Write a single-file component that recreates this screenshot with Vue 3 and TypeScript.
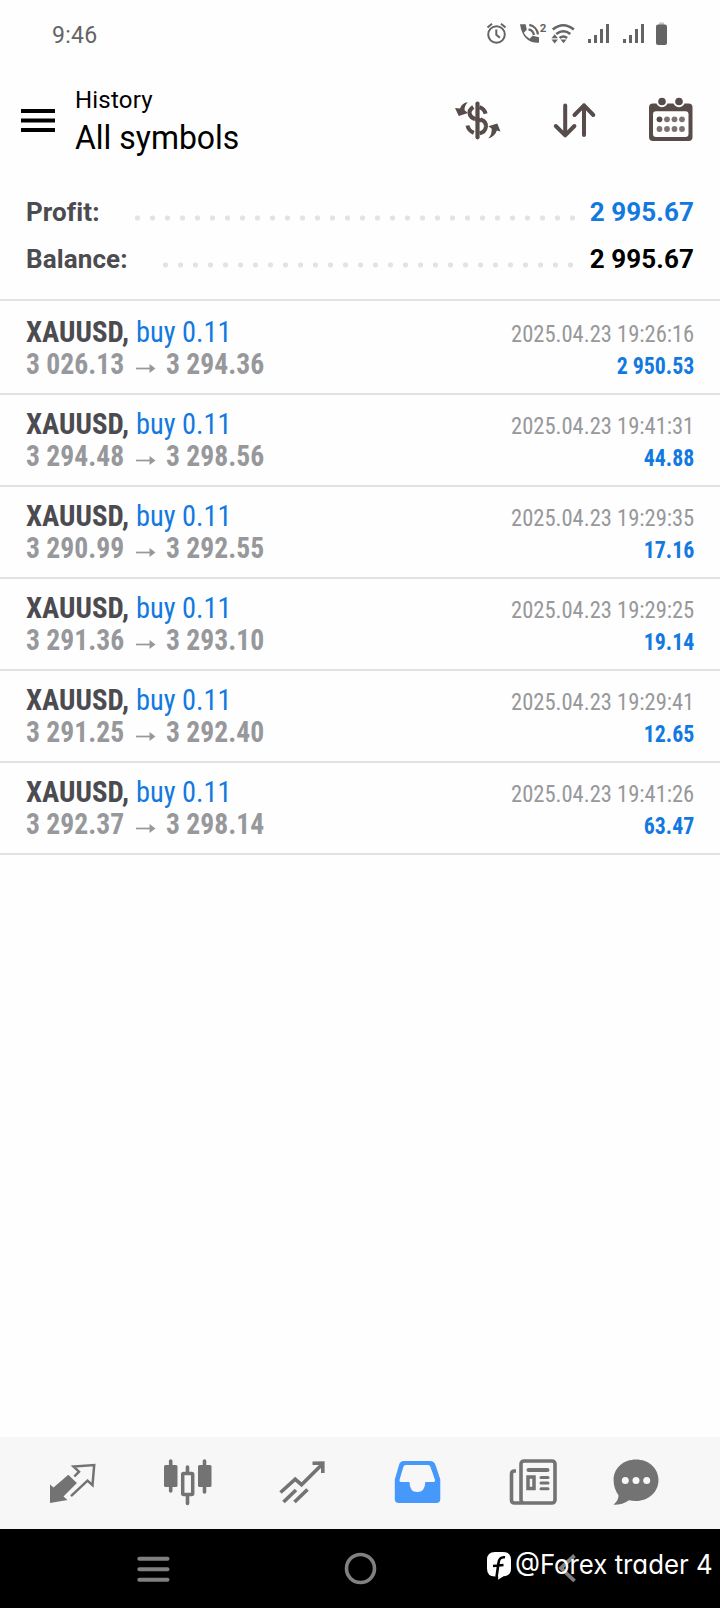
<script setup lang="ts">
interface Deal {
  open: string
  close: string
  time: string
  profit: string
}

const summary = [
  { label: 'Profit:', value: '2 995.67', kind: 'profit' },
  { label: 'Balance:', value: '2 995.67', kind: 'balance' },
]

const deals: Deal[] = [
  { open: '3 026.13', close: '3 294.36', time: '2025.04.23 19:26:16', profit: '2 950.53' },
  { open: '3 294.48', close: '3 298.56', time: '2025.04.23 19:41:31', profit: '44.88' },
  { open: '3 290.99', close: '3 292.55', time: '2025.04.23 19:29:35', profit: '17.16' },
  { open: '3 291.36', close: '3 293.10', time: '2025.04.23 19:29:25', profit: '19.14' },
  { open: '3 291.25', close: '3 292.40', time: '2025.04.23 19:29:41', profit: '12.65' },
  { open: '3 292.37', close: '3 298.14', time: '2025.04.23 19:41:26', profit: '63.47' },
]
</script>

<template>
  <div class="screen">
    <div class="status">
      <span class="clock">9:46</span>
      <svg class="status-icons" width="190" height="30" viewBox="480 20 190 30">
        <g fill="none" stroke="#646464" stroke-width="2">
          <circle cx="496.5" cy="34.5" r="8.3" />
          <path d="M496.3 29.500v5.300l3.600 3M487.500 27.500l4.500-3.700M505.500 27.500l-4.500-3.700" />
        </g>
        <path d="M520 24.200h5.600l1.200 5.600-3 3q2 4 5.800 6l3-3 6.400 1.400v5.600Q523 43.500 520 24.200z" fill="#646464" />
        <path d="M528.500 29.300a7 7 0 0 1 5.500 5.700M529.300 24.800a11 11 0 0 1 8.700 9.500" fill="none" stroke="#646464" stroke-width="2.200" />
        <text x="539.800" y="31.500" class="tiny">2</text>
        <g fill="none" stroke="#646464" stroke-width="2.600">
          <path d="M552.800 29.500q10.500-8.500 21 0M556.300 34q7-5.500 14 0M559.600 38q3.800-3 7.500 0" />
        </g>
        <path d="M551.500 38.200l3.200-4 3.200 4zM551.500 39.400l3.200 4 3.200-4zM560.500 39.400h6l-3 3.800z" fill="#646464" />
        <path d="M588 39h3v4h-3zM594 35h3v8h-3zM600 29h3v14h-3zM606 24h3v19h-3zM623 39h3v4h-3zM629 35h3v8h-3zM635 29h3v14h-3zM641 24h3v19h-3z" fill="#646464" />
        <path d="M659 22.500h5v3h-5z" fill="#c4c4c4" />
        <rect x="656" y="24.500" width="11" height="20.500" rx="2" fill="#646464" />
      </svg>
    </div>

    <header class="top">
      <svg class="menu" width="34" height="23" viewBox="0 0 34 23">
        <path d="M0 0h34v4H0zM0 9.500h34v4H0zM0 19h34v4H0z" />
      </svg>
      <div class="titles">
        <div class="sub">History</div>
        <div class="title">All symbols</div>
      </div>
      <svg class="actions" width="250" height="50" viewBox="450 95 250 50">
        <g fill="none" stroke="#574c49" stroke-width="4">
          <path d="M477.500 103.500v33.800" stroke-linecap="round" stroke-width="4.200" />
          <path d="M485.600 113.800q-1.200-5-6.200-6.600M473.300 107q-4.800 3-3.500 7.500 1 3 5.200 4.500M480.500 119.500q6 1.800 5.400 7.500-.8 5.200-6.400 6.200M467.500 125.500q.9 5 6.300 7.300" />
          <path d="M475 119l6 1.500" />
        </g>
        <path d="M467.800 102.300q-5.500.3-7.800 6.200l-5-.6 3.800 8 9.200-3-3.400-2.600q-.6-4.200 3.200-8z" fill="#574c49" />
        <path d="M488.300 138.600q7-2.500 8.500-8.200l3.700 1.200-3.200-8-9 2.600 3.300 2.400q.7 5.500-3.300 10z" fill="#574c49" />
        <g fill="none" stroke="#574c49" stroke-width="4" stroke-linecap="round" stroke-linejoin="round">
          <path d="M565.200 105.500v29.800M555.800 126l9.400 9.300 9.200-9.300M584 135v-29.700M574.500 115l9.500-9.700 9.300 9.700" />
        </g>
        <rect x="649" y="103.500" width="43.500" height="37.500" rx="4" fill="#574c49" />
        <rect x="653" y="111.300" width="35.500" height="25.800" rx="3" fill="#fff" />
        <g fill="#574c49" stroke="#fff" stroke-width="2">
          <circle cx="662" cy="101.500" r="4.800" />
          <circle cx="679" cy="101.500" r="4.800" />
        </g>
        <g fill="#7d7471">
          <circle cx="659.500" cy="119.300" r="2.900" fill="#574c49" />
          <circle cx="667" cy="119.300" r="2.900" />
          <circle cx="674.500" cy="119.300" r="2.900" />
          <circle cx="682" cy="119.300" r="2.900" />
          <circle cx="659.500" cy="129" r="2.900" />
          <circle cx="667" cy="129" r="2.900" />
          <circle cx="674.500" cy="129" r="2.900" />
          <circle cx="682" cy="129" r="2.900" />
        </g>
      </svg>
    </header>

    <section class="summary">
      <div v-for="s in summary" :key="s.label" class="sum-row" :class="s.kind">
        <span class="label">{{ s.label }}</span>
        <span class="dots"></span>
        <span class="value">{{ s.value }}</span>
      </div>
    </section>

    <main class="deals">
      <div v-for="d in deals" :key="d.open" class="deal">
        <div class="left">
          <div class="symbol"><b>XAUUSD,</b><span class="side">buy 0.11</span></div>
          <div class="prices">
            <span class="price">{{ d.open }}</span>
            <svg class="arrow" width="20" height="11" viewBox="0 0 20 11">
              <path d="M0 5.500h17" stroke="#97989b" stroke-width="1.700" />
              <path d="M13.500 1l6 4.500-6 4.500z" fill="#97989b" />
            </svg>
            <span class="price">{{ d.close }}</span>
          </div>
        </div>
        <div class="right">
          <div class="time">{{ d.time }}</div>
          <div class="amount">{{ d.profit }}</div>
        </div>
      </div>
    </main>

    <nav class="tabs">
      <svg width="720" height="92" viewBox="0 1437 720 92">
        <g fill="#737373">
          <path d="M50 1484.500l3.500 3 14.800-12.700 8.600 8.200-13.400 13.500 4 3.500-17.500 3z" />
          <path d="M74.300 1476.500l4.700-4.800-5.500-5.200 20.700-1.500-1.700 20.200-5-4.600-16.500 15.500" fill="none" stroke="#737373" stroke-width="2.500" />
          <rect x="164" y="1465" width="13.500" height="22" rx="1.500" />
          <rect x="198" y="1465" width="13.500" height="22" rx="1.500" />
          <path d="M170.700 1461v30M204.500 1461v31M187.500 1467v6M187.500 1496v7.500" stroke="#737373" stroke-width="3.600" stroke-linecap="round" />
          <rect x="182.700" y="1473.500" width="10" height="21" rx="1" fill="none" stroke="#737373" stroke-width="3.500" />
        </g>
        <g fill="none" stroke="#737373" stroke-width="3.600">
          <path d="M280.500 1492.500l14.700-13.300 6.300 5.500 21-20.700M312.500 1463.300l10.300-.2v10" />
          <path d="M283.500 1502l12.500-12M294.500 1502l13-12.500" stroke-width="3.700" />
        </g>
        <path d="M404 1461h26q4 0 5.500 4l4.800 14.500V1499q0 4-4 4h-37.500q-4 0-4-4v-19.500l4.200-14.500q1-4 5-4zM405.500 1465q-1.500 0-2 1.500L399.500 1480q-.4 2 1.500 2h8.500q0 10 7.800 10t8-10h8.200q2 0 1.500-2l-4.700-13.500q-.5-1.500-2-1.500z" fill="#4699fb" fill-rule="evenodd" />
        <g fill="none" stroke="#737373" stroke-width="3.600">
          <rect x="521" y="1461" width="34" height="42" rx="3" />
          <path d="M516 1471h-1.500q-3 0-3 3V1500q0 3 3 3h8" />
          <path d="M528.500 1470h19" stroke-width="4" stroke-linecap="round" />
          <rect x="528" y="1477" width="6" height="11.500" stroke-width="3.500" />
          <path d="M541 1477.500h7M541 1483h7M541 1488.700h7" stroke-width="3" stroke-linecap="round" />
        </g>
        <path d="M636 1459.500c12.500 0 22.500 8.500 22.500 20.500s-10 21-22.500 21q-4 0-7-.8-6.500 4.800-15.500 4.600 5.500-5.300 5-9.600-4.900-6.500-4.900-15.200c0-12 9.900-20.500 22.400-20.500z" fill="#737373" />
        <g fill="#f7f7f7"><circle cx="625.300" cy="1480.500" r="3.500" /><circle cx="636" cy="1480.500" r="3.500" /><circle cx="646.700" cy="1480.500" r="3.500" /></g>
      </svg>
    </nav>

    <footer class="system">
      <svg width="720" height="79" viewBox="0 1529 720 79">
        <path d="M139.300 1558.800h28.200M139.300 1569.300h28.200M139.300 1579.700h28.200" stroke="#808080" stroke-width="4" stroke-linecap="round" />
        <circle cx="360.500" cy="1568.500" r="14" fill="none" stroke="#808080" stroke-width="3.600" />
        <path d="M574.500 1555.500l-13.500 12.500 13.500 13" fill="none" stroke="#808080" stroke-width="3.800" />
        <path d="M495 1552h8q8 0 8 8v8.500q0 7.500-7.500 7.800l-5.500 3.400.3-3.200H495q-8 0-8-8V1560q0-8 8-8z" fill="#fff" />
        <path d="M505 1557.300q-6-.8-6.500 6L496.500 1577M493 1566l10.500-1" fill="none" stroke="#000" stroke-width="2.600" />
      </svg>
      <span class="handle">@Forex trader 4</span>
    </footer>
  </div>
</template>

<style>
body {
  background: #fff;
}
</style>

<style scoped>
.screen {
  width: 720px;
  height: 1608px;
  display: flex;
  flex-direction: column;
  overflow: hidden;
  background: #fefefe;
  font-family: Roboto, "Liberation Sans", sans-serif;
  color: #000;
  white-space: nowrap;
}
svg {
  display: block;
  flex: none;
}
.status {
  height: 75px;
  display: flex;
  justify-content: space-between;
  padding: 20px 50px 0 52px;
  box-sizing: border-box;
}
.clock {
  font-size: 23px;
  line-height: 31px;
  color: #646464;
  letter-spacing: 0.3px;
}
.tiny {
  font: 700 11.5px Roboto, sans-serif;
  fill: #646464;
}
.top {
  height: 105px;
  display: flex;
  padding: 0 20px 0 21px;
  box-sizing: border-box;
}
.menu {
  margin-top: 34px;
}
.titles {
  flex: 1;
  padding: 10px 0 0 20px;
}
.sub {
  font-size: 24px;
  line-height: 30px;
  letter-spacing: 0.2px;
}
.title {
  font-size: 33px;
  line-height: 46px;
  transform: scaleX(0.968);
  transform-origin: left;
}
.actions {
  margin-top: 20px;
}
.summary {
  height: 121px;
  padding: 9px 26px 0;
  box-sizing: border-box;
  border-bottom: 2px solid #e2e2e2;
  margin-bottom: 2px;
}
.sum-row {
  display: flex;
  height: 47px;
  line-height: 47px;
  font-size: 26px;
  font-weight: 700;
  letter-spacing: 0.1px;
}
.label {
  color: #4b4b50;
}
.profit .label {
  width: 108px;
}
.balance .label {
  width: 136px;
}
.dots {
  flex: 1;
  height: 6px;
  margin-top: 26px;
  background: radial-gradient(circle at 3.500px 3px, #e3e3e3 2.300px, transparent 2.900px) 0 0 / 15px 6px repeat-x;
}
.value {
  width: 118px;
  text-align: right;
}
.profit .value {
  color: #1279e0;
}
.deal {
  height: 92px;
  box-sizing: border-box;
  border-bottom: 2px solid #e2e2e2;
  padding: 12px 26px 0;
  display: flex;
  justify-content: space-between;
  font-family: "Roboto Condensed", Roboto, sans-serif;
  font-stretch: 75%;
}
.symbol {
  display: flex;
  font-size: 30px;
  line-height: 34px;
  color: #1279e0;
}
.symbol b {
  width: 110px;
  color: #4b4b50;
  transform: scaleX(0.96);
  transform-origin: left;
}
.side {
  transform: scaleX(0.945);
  transform-origin: left;
}
.prices {
  display: flex;
  margin-top: -1px;
  font-size: 30px;
  line-height: 31px;
  font-weight: 700;
  color: #97989b;
}
.price {
  width: 99px;
  transform: scaleX(0.921);
  transform-origin: left;
}
.arrow {
  margin: 15px 10px 0 11px;
}
.right {
  text-align: right;
}
.time {
  font-size: 24px;
  line-height: 38px;
  color: #97989b;
  transform: scaleX(0.938);
  transform-origin: right;
}
.amount {
  font-size: 24px;
  line-height: 26px;
  font-weight: 700;
  color: #1279e0;
  transform: scaleX(0.91);
  transform-origin: right;
}
.tabs {
  margin-top: auto;
  height: 92px;
  background: #f7f7f7;
}
.system {
  position: relative;
  height: 79px;
  background: #000;
}
.handle {
  position: absolute;
  left: 515px;
  top: 20px;
  font-family: Inter, sans-serif;
  font-feature-settings: "cv11";
  font-size: 27px;
  line-height: 32px;
  color: #fff;
  transform: scaleX(0.955);
  transform-origin: left;
}
</style>
